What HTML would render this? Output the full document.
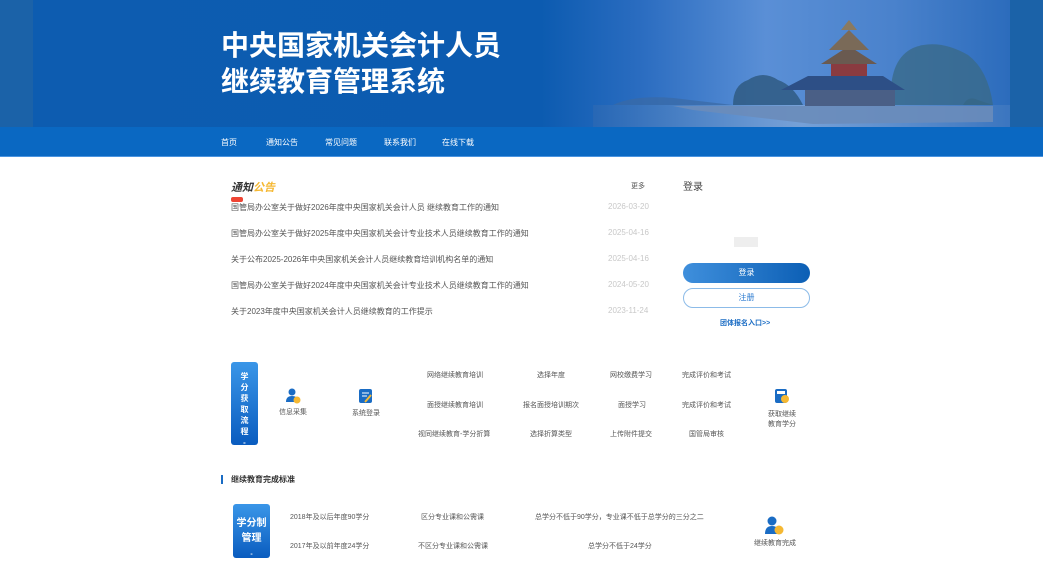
<!DOCTYPE html>
<html><head><meta charset="utf-8"><style>
*{margin:0;padding:0;box-sizing:border-box}
body{width:1043px;height:574px;overflow:hidden;background:#fff;font-family:"Liberation Sans","Noto Sans CJK SC",sans-serif;color:#444;position:relative}
.a{position:absolute;white-space:nowrap}
.banner{position:absolute;left:0;top:0;width:1043px;height:127px;background:#1b62a8}
.bimg{position:absolute;left:33px;top:0;width:977px;height:127px;background:linear-gradient(90deg,#0d5cb0 0%,#0c5bb0 52%,#2a6cc0 62%,#5a8fd6 75%,#4a82cc 88%,#2c6cbc 100%);overflow:hidden}
.nav{position:absolute;left:0;top:127px;width:1043px;height:30px;background:#0a68c2;border-bottom:1px solid #4a94e0}
.nav span{position:absolute;top:10px;font-size:8px;color:#fff}
.t{font-size:8px;color:#555}
.d{font-size:8px;color:#c8c8c8}
.s{font-size:7px;color:#555}
.vb{position:absolute;background:linear-gradient(180deg,#3a96e8,#0a5cbf);border-radius:3px;color:#fff;font-weight:bold;text-align:center}
</style></head><body>
<div class="banner"></div>
<div class="bimg">
 <svg width="977" height="127" style="position:absolute;left:0;top:0">
  <defs><linearGradient id="w" x1="0" x2="1"><stop offset="0" stop-color="#2a68b4"/><stop offset=".5" stop-color="#7ea6d8"/><stop offset="1" stop-color="#3f78c0"/></linearGradient></defs>
  <rect x="560" y="105" width="417" height="22" fill="url(#w)" opacity=".8"/>
  <path d="M580 105 Q600 95 640 98 L700 105Z" fill="#3a6aa4" opacity=".7"/>
  <polygon points="640,106 960,106 960,122 780,124 660,110" fill="#6a8cba" opacity=".9"/>
  <path d="M930 105 Q935 95 945 100 L960 105Z" fill="#2a5d86"/>
  <path d="M700 105 Q700 85 715 80 Q730 70 745 80 Q760 85 770 105Z" fill="#2f5b82" opacity=".85"/>
  <path d="M858 105 Q855 60 880 48 Q905 38 935 55 Q955 70 960 105Z" fill="#3a6a8a" opacity=".8"/>
  <rect x="772" y="88" width="90" height="18" fill="#4a5f86"/>
  <polygon points="748,90 775,76 850,76 872,90" fill="#2d4f86"/>
  <rect x="798" y="60" width="36" height="16" fill="#8a3b40"/>
  <polygon points="788,64 816,46 844,64" fill="#6a5a50"/>
  <polygon points="796,50 816,30 836,50" fill="#7a6a58"/>
  <polygon points="808,30 816,20 824,30" fill="#8a7a60"/>
 </svg>
 <div class="a" style="left:188px;top:28px;font-size:28px;font-weight:bold;color:#fff;line-height:36px">中央国家机关会计人员<br>继续教育管理系统</div>
</div>
<div class="nav">
 <span style="left:221px">首页</span><span style="left:266px">通知公告</span><span style="left:325px">常见问题</span><span style="left:384px">联系我们</span><span style="left:442px">在线下载</span>
</div>
<div class="a" style="left:231px;top:179px;font-size:11px;font-weight:bold;font-style:italic;color:#333">通知<span style="color:#f5b833">公告</span></div>
<div class="a s" style="left:631px;top:181px;font-size:7px">更多</div>
<div class="a" style="left:231px;top:197px;width:12px;height:5px;background:#e43;border-radius:2px"></div>
<div class="a t" style="left:231px;top:202px">国管局办公室关于做好2026年度中央国家机关会计人员 继续教育工作的通知</div>
<div class="a t" style="left:231px;top:228px">国管局办公室关于做好2025年度中央国家机关会计专业技术人员继续教育工作的通知</div>
<div class="a t" style="left:231px;top:254px">关于公布2025-2026年中央国家机关会计人员继续教育培训机构名单的通知</div>
<div class="a t" style="left:231px;top:280px">国管局办公室关于做好2024年度中央国家机关会计专业技术人员继续教育工作的通知</div>
<div class="a t" style="left:231px;top:306px">关于2023年度中央国家机关会计人员继续教育的工作提示</div>
<div class="a d" style="left:608px;top:202px">2026-03-20</div>
<div class="a d" style="left:608px;top:228px">2025-04-16</div>
<div class="a d" style="left:608px;top:254px">2025-04-16</div>
<div class="a d" style="left:608px;top:280px">2024-05-20</div>
<div class="a d" style="left:608px;top:306px">2023-11-24</div>
<div class="a" style="left:683px;top:178px;font-size:10px;color:#444">登录</div>
<div class="a" style="left:734px;top:237px;width:24px;height:10px;background:#eee"></div>
<div class="a" style="left:683px;top:263px;width:127px;height:20px;border-radius:10px;background:linear-gradient(90deg,#3f8fdc,#0c5fb5);color:#fff;font-size:8px;text-align:center;line-height:20px">登录</div>
<div class="a" style="left:683px;top:288px;width:127px;height:20px;border-radius:10px;border:1px solid #8cbbe8;color:#2a7ad0;font-size:8px;text-align:center;line-height:18px">注册</div>
<div class="a" style="left:720px;top:318px;font-size:7px;font-weight:bold;color:#1a6cc4">团体报名入口&gt;&gt;</div>

<div class="vb" style="left:231px;top:362px;width:27px;height:83px;font-size:8px;line-height:11px;padding-top:9px">学<br>分<br>获<br>取<br>流<br>程<br>-</div>
<svg class="a" style="left:285px;top:388px" width="16" height="16"><circle cx="7" cy="4" r="3.5" fill="#1a6cc4"/><path d="M1 14 Q1 8 7 8 Q13 8 13 14Z" fill="#1a6cc4"/><circle cx="12" cy="12" r="3.5" fill="#f5b833"/></svg>
<div class="a s" style="left:279px;top:407px">信息采集</div>
<svg class="a" style="left:358px;top:388px" width="16" height="16"><rect x="1" y="1" width="13" height="14" rx="2" fill="#1a6cc4"/><path d="M4 5h7M4 8h5" stroke="#fff"/><path d="M7 14 L13 7" stroke="#f5b833" stroke-width="2"/></svg>
<div class="a s" style="left:352px;top:408px">系统登录</div>
<div class="a s" style="left:427px;top:370px">网络继续教育培训</div>
<div class="a s" style="left:537px;top:370px">选择年度</div>
<div class="a s" style="left:610px;top:370px">网校缴费学习</div>
<div class="a s" style="left:682px;top:370px">完成评价和考试</div>
<div class="a s" style="left:427px;top:400px">面授继续教育培训</div>
<div class="a s" style="left:523px;top:400px">报名面授培训期次</div>
<div class="a s" style="left:618px;top:400px">面授学习</div>
<div class="a s" style="left:682px;top:400px">完成评价和考试</div>
<div class="a s" style="left:418px;top:429px">视同继续教育-学分折算</div>
<div class="a s" style="left:530px;top:429px">选择折算类型</div>
<div class="a s" style="left:610px;top:429px">上传附件提交</div>
<div class="a s" style="left:689px;top:429px">国管局审核</div>
<svg class="a" style="left:774px;top:388px" width="16" height="16"><rect x="1" y="1" width="12" height="14" rx="2" fill="#1a6cc4"/><rect x="3" y="3" width="8" height="3" fill="#fff"/><circle cx="11" cy="11" r="4" fill="#f5b833"/></svg>
<div class="a s" style="left:768px;top:410px;line-height:10px;text-align:center">获取继续<br>教育学分</div>

<div class="a" style="left:221px;top:475px;width:2px;height:9px;background:#1a6cc4"></div>
<div class="a" style="left:231px;top:474px;font-size:8px;font-weight:bold;color:#333">继续教育完成标准</div>
<div class="vb" style="left:233px;top:504px;width:37px;height:54px;font-size:10px;line-height:15px;padding-top:12px">学分制<br>管理<br><span style="font-size:7px">-</span></div>
<div class="a s" style="left:290px;top:512px">2018年及以后年度90学分</div>
<div class="a s" style="left:421px;top:512px">区分专业课和公需课</div>
<div class="a s" style="left:535px;top:512px">总学分不低于90学分，专业课不低于总学分的三分之二</div>
<div class="a s" style="left:290px;top:541px">2017年及以前年度24学分</div>
<div class="a s" style="left:418px;top:541px">不区分专业课和公需课</div>
<div class="a s" style="left:588px;top:541px">总学分不低于24学分</div>
<svg class="a" style="left:764px;top:516px" width="20" height="20"><circle cx="8" cy="5" r="4.5" fill="#1a6cc4"/><path d="M1 18 Q1 10 8 10 Q15 10 15 18Z" fill="#1a6cc4"/><circle cx="15" cy="14" r="4.5" fill="#f5b833"/></svg>
<div class="a s" style="left:754px;top:538px">继续教育完成</div>
</body></html>
